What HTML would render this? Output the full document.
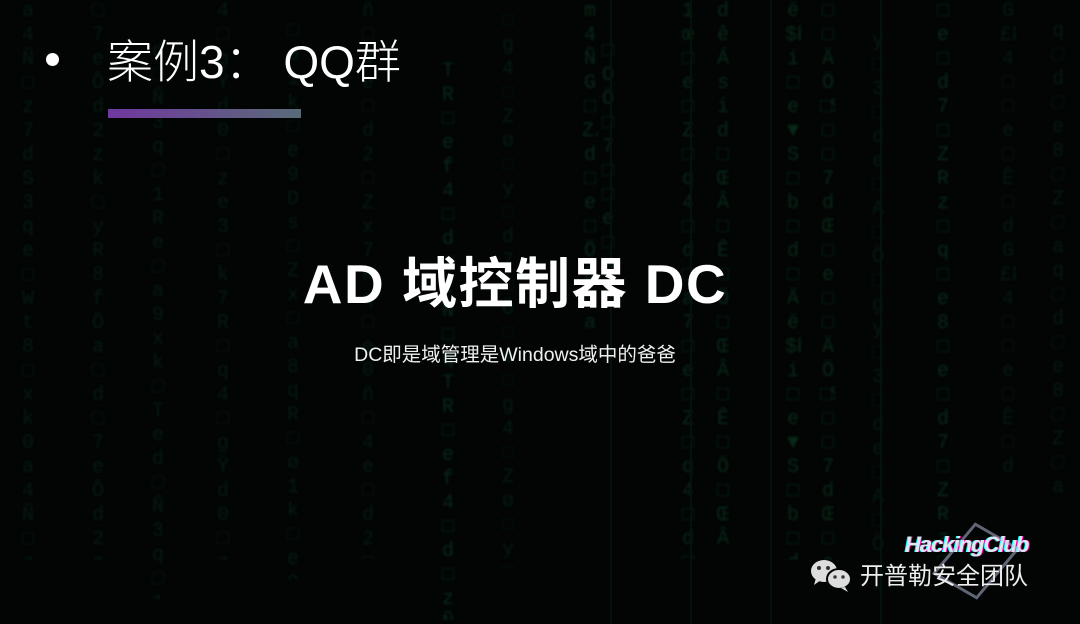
<!DOCTYPE html>
<html><head><meta charset="utf-8"><style>
html,body{margin:0;padding:0;width:1080px;height:624px;overflow:hidden}
body{background:#020504;position:relative;font-family:"Liberation Sans","Noto Sans CJK SC",sans-serif}
.w{position:absolute;left:0;top:0;width:1080px;height:624px;overflow:hidden}
.c{position:absolute;top:0;width:16px;max-height:560px;overflow:hidden;font-family:"Liberation Mono",monospace;font-size:20px;line-height:24px;color:#0a2818;word-break:break-all;text-align:center;filter:blur(1px)}
.d{color:#071a10}
.l{position:absolute;top:0;width:2px;height:624px;background:#04120a}
</style></head><body><div class="w">
<div class="c d" style="left:20px">a4Ñ□z7dS3qe□Wt8□xk0a4Ñ□z7dS3qe</div>
<div class="c d" style="left:90px">□7eŌd2zk□yR8fÖa□d□7eŌd2zk□yR8f</div>
<div class="c d" style="left:150px;top:40px">d□Ñ3q□1Re□a9xk□Ted□Ñ3q□1Re□a9</div>
<div class="c d" style="left:215px">4□gŸd0□ze3□k7R□q4□gŸd0□ze3□k7R</div>
<div class="c d" style="left:285px;top:20px">□ø1k□e9Ds□Zx□a8qR□ø1k□e9Ds□Zx</div>
<div class="c d" style="left:360px">ñ□4e□d2□Zx7Rq□e0ñ□4e□d2□Zx7Rq□e0</div>
<div class="c" style="left:440px;top:60px">TR□ef4□d□zÑ□qTR□ef4□d□zÑ□q</div>
<div class="c d" style="left:500px;top:10px">□g4□Zø□y□d7□Ö□e□g4□Zø□y□d7□Ö</div>
<div class="c" style="left:582px">m4ÑG□Z/d□e□Ö3□a</div>
<div class="c" style="left:600px;top:40px">□OÖ□7□□e□d</div>
<div class="c" style="left:680px">1œ□e□Z□q4□d□a7□e□Z□q4□d□a7</div>
<div class="c" style="left:715px">dêÁsid□ŒÂ□Ê□Ö□ŒÂ□Ê□Ö□ŒÂ</div>
<div class="c" style="left:785px">ë$Êi□e▼S□b□d□Äë$Êi□e▼S□b□d□Ä</div>
<div class="c" style="left:820px">□□ÄÖ□%□□7dŒ□e□□ÄÖ□%□□7dŒ□e</div>
<div class="c d" style="left:870px;top:30px">y□3□de□A□Ö□gy□3□de□A□Ö□g</div>
<div class="c" style="left:935px">□e□d7□ZRz□q□e8□e□d7□ZRz□q□e8</div>
<div class="c d" style="left:1000px">G£D/4□□e□Ê□dG£D/4□□e□Ê□d</div>
<div class="c d" style="left:1050px;top:20px">q□d□e8□Z□aq□d□e8□Z□a</div>
<div class="l" style="left:610px"></div><div class="l" style="left:690px"></div><div class="l" style="left:770px"></div><div class="l" style="left:880px"></div>

<div style="position:absolute;left:46px;top:53px;width:13px;height:13px;border-radius:50%;background:#fff"></div>
<div style="position:absolute;left:107px;top:34px;font-size:46px;line-height:56px;color:#fff;font-weight:300">案例3： QQ群</div>
<div style="position:absolute;left:108px;top:109px;width:193px;height:9px;background:linear-gradient(90deg,#7038a0,#5a6b78)"></div>

<div style="position:absolute;left:0;width:1030px;top:250px;text-align:center;font-size:55px;line-height:68px;font-weight:bold;color:#fff;letter-spacing:1.5px">AD 域控制器 DC</div>
<div style="position:absolute;left:0;width:1030px;top:342px;text-align:center;font-size:19.5px;line-height:26px;color:#f0f0f0">DC即是域管理是Windows域中的爸爸</div>

<div style="position:absolute;left:905px;top:532px;font-size:22px;font-weight:bold;font-style:italic;color:#dfe8f0;letter-spacing:-1px;text-shadow:1px 0 #f0a,-1px 0 #0ff">HackingClub</div>
<div style="position:absolute;left:950px;top:528px;width:46px;height:60px;border:3px solid #c0c8e8;transform:rotate(30deg) skew(-10deg);opacity:.5"></div>
<svg style="position:absolute;left:810px;top:558px" width="46" height="36" viewBox="0 0 46 36">
<ellipse cx="14" cy="13" rx="13" ry="11" fill="#ddd"/><path d="M6 20 L4 27 L11 22Z" fill="#ddd"/>
<ellipse cx="29" cy="21" rx="12" ry="10" fill="#ddd" stroke="#020504" stroke-width="2"/><path d="M35 29 L38 34 L31 30Z" fill="#ddd"/>
<circle cx="9" cy="10" r="2" fill="#333"/><circle cx="18" cy="10" r="2" fill="#333"/><circle cx="25" cy="19" r="1.7" fill="#333"/><circle cx="33" cy="19" r="1.7" fill="#333"/></svg>
<div style="position:absolute;left:860px;top:562px;font-size:24px;line-height:30px;color:#eee">开普勒安全团队</div>
</div></body></html>
